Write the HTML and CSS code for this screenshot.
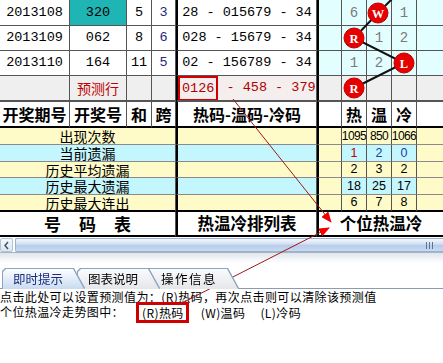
FILE: index.html
```html
<!DOCTYPE html>
<html lang="zh-CN">
<head>
    <meta charset="UTF-8">
    <title>个位热温冷走势图</title>
    <link rel="stylesheet" href="styles.css">
</head>
<body>
    <!-- 走势表 -->
    <div class="sheet">
        <!-- 第 1 行 -->
        <div class="c num">2013108</div>
        <div class="c num teal">320</div>
        <div class="c num">5</div>
        <div class="c num navy">3</div>
        <div class="c num mid">28 - 015679 - 34</div>
        <div class="c tr sep"></div>
        <div class="c tr dig">6</div>
        <div class="c tr"></div>
        <div class="c tr dig">1</div>
        <div class="c tr last"></div>

        <!-- 第 2 行 -->
        <div class="c num">2013109</div>
        <div class="c num">062</div>
        <div class="c num">8</div>
        <div class="c num navy">6</div>
        <div class="c num mid">028 - 15679 - 34</div>
        <div class="c tr sep"></div>
        <div class="c tr"></div>
        <div class="c tr dig">1</div>
        <div class="c tr dig">2</div>
        <div class="c tr last"></div>

        <!-- 第 3 行 -->
        <div class="c num">2013110</div>
        <div class="c num">164</div>
        <div class="c num">11</div>
        <div class="c num navy">5</div>
        <div class="c num mid">02 - 156789 - 34</div>
        <div class="c tr sep"></div>
        <div class="c tr dig">1</div>
        <div class="c tr dig">2</div>
        <div class="c tr"></div>
        <div class="c tr last"></div>

        <!-- 预测行 -->
        <div class="c pr"></div>
        <div class="c pr red-label">预测行</div>
        <div class="c pr"></div>
        <div class="c pr"></div>
        <div class="c num mid pr pred"><span class="hit">0126</span><span class="rest"> - 458 - 379</span></div>
        <div class="c pr sep"></div>
        <div class="c pr"></div>
        <div class="c pr"></div>
        <div class="c pr"></div>
        <div class="c pr last"></div>

        <!-- 表头 -->
        <div class="c hd">开奖期号</div>
        <div class="c hd">开奖号</div>
        <div class="c hd">和</div>
        <div class="c hd">跨</div>
        <div class="c hd mid">热码-温码-冷码</div>
        <div class="c hd sep"></div>
        <div class="c hd">热</div>
        <div class="c hd">温</div>
        <div class="c hd">冷</div>
        <div class="c hd last"></div>

        <!-- 统计行 -->
        <div class="c st yl label">出现次数</div>
        <div class="c st yl mid"></div>
        <div class="c st yl sep"></div>
        <div class="c st yl val tight">1095</div>
        <div class="c st yl val tight">850</div>
        <div class="c st yl val tight">1066</div>
        <div class="c st yl last"></div>

        <div class="c st cy label">当前遗漏</div>
        <div class="c st cy mid"></div>
        <div class="c st yl sep"></div>
        <div class="c st cy val red">1</div>
        <div class="c st cy val blue">2</div>
        <div class="c st cy val blue">0</div>
        <div class="c st yl last"></div>

        <div class="c st yl label">历史平均遗漏</div>
        <div class="c st yl mid"></div>
        <div class="c st yl sep"></div>
        <div class="c st yl val">2</div>
        <div class="c st yl val">3</div>
        <div class="c st yl val">2</div>
        <div class="c st yl last"></div>

        <div class="c st cy label">历史最大遗漏</div>
        <div class="c st cy mid"></div>
        <div class="c st yl sep"></div>
        <div class="c st cy val">18</div>
        <div class="c st cy val">25</div>
        <div class="c st cy val">17</div>
        <div class="c st yl last"></div>

        <div class="c st yl label end">历史最大连出</div>
        <div class="c st yl mid end"></div>
        <div class="c st yl sep end"></div>
        <div class="c st yl val end">6</div>
        <div class="c st yl val end">7</div>
        <div class="c st yl val end">8</div>
        <div class="c st yl last end"></div>

        <!-- 底部标题 -->
        <div class="c ft label spaced">号码表</div>
        <div class="c ft mid">热温冷排列表</div>
        <div class="c ft sep wide">个位热温冷</div>
    </div>

    <!-- 横向滚动条 -->
    <div class="hscroll">
        <div class="hs-btn">
            <svg width="7" height="9" viewBox="0 0 7 9"><path d="M5 1 L2 4.5 L5 8" fill="none" stroke="#3d4f6e" stroke-width="1.4"/></svg>
        </div>
        <div class="hs-thumb">
            <svg class="grip" width="8" height="7" viewBox="0 0 8 7">
                <rect x="0" y="0" width="1" height="7" fill="#5d7393"/>
                <rect x="3" y="0" width="1" height="7" fill="#5d7393"/>
                <rect x="6" y="0" width="1" height="7" fill="#5d7393"/>
            </svg>
        </div>
    </div>
    <div class="hs-shade"></div>

    <!-- 提示面板 -->
    <div class="panel">
        <div class="tabs">
            <div class="tab active"><span>即时提示</span></div>
            <div class="tab second"><span>图表说明</span></div>
            <div class="tab third"><span>操作信息</span></div>
        </div>
        <div class="tip">
            <p class="line">点击此处可以设置预测值为：(R)热码，再次点击则可以清除该预测值</p>
            <p class="line two">个位热温冷走势图中：<span class="boxed">(R)热码</span><span class="opt">(W)温码</span><span class="opt l">(L)冷码</span></p>
        </div>
    </div>

    <!-- 走势连线与标注箭头 -->
    <svg class="overlay" width="443" height="363" viewBox="0 0 443 363">
        <defs>
            <marker id="ah" markerWidth="11" markerHeight="9" refX="10" refY="4.5" orient="auto" markerUnits="userSpaceOnUse">
                <path d="M0,0 L11,4.5 L0,9 z" fill="#f00000"/>
            </marker>
        </defs>
        <polyline points="404,-13 378,13 354,38 404,63 354,88" fill="none" stroke="#111" stroke-width="2"/>
        <g class="ball">
            <circle cx="378" cy="13" r="10"/>
            <text x="378" y="17.5">W</text>
            <circle cx="354" cy="38" r="10"/>
            <text x="354" y="42.5">R</text>
            <circle cx="404" cy="63" r="10"/>
            <text x="404" y="67.5">L</text>
            <circle cx="354" cy="88" r="10"/>
            <text x="354" y="92.5">R</text>
        </g>
        <line x1="233" y1="99" x2="331" y2="222" stroke="#9c1a1a" stroke-width="1" marker-end="url(#ah)"/>
        <line x1="178" y1="305" x2="329" y2="228" stroke="#9c1a1a" stroke-width="1" marker-end="url(#ah)"/>
    </svg>
</body>
</html>
```

FILE: styles.css
```css
* {
    margin: 0;
    padding: 0;
    box-sizing: border-box;
}

body {
    width: 443px;
    height: 363px;
    overflow: hidden;
    position: relative;
    background: #fff;
    color: #000;
    font-family: "Noto Sans CJK SC", sans-serif;
}

/* 走势表 */
.sheet {
    display: grid;
    grid-template-columns: 70px 57px 25px 24px 141px 25px 25px 25px 25px 26px;
    grid-template-rows: 26px 25px 25px 25px 27px 17px 17px 16px 17px 17px 25px;
}

.c {
    display: flex;
    align-items: center;
    justify-content: center;
    border-right: 1px solid #555;
    border-bottom: 1px solid #555;
    white-space: nowrap;
    overflow: hidden;
    line-height: 1;
}

.c.last {
    border-right: none;
}

.num {
    font-family: "Liberation Mono", monospace;
    font-size: 13.5px;
}

.teal {
    background: #1fb5b5;
}

.navy {
    color: #1c2a80;
}

.mid {
    border-left: 2px solid #000;
}

.sep {
    border-left: 2px solid #000;
}

/* 右侧走势区 */
.tr {
    background: #e2feff;
}

.dig {
    font-family: "Liberation Mono", monospace;
    font-size: 14px;
    color: #7a7a7a;
}

/* 预测行 */
.pr {
    background: #efefef;
}

.red-label {
    color: #c00000;
    font-size: 14px;
}

.pred {
    background: #f4eeee;
    color: #b00000;
    justify-content: flex-start;
    align-items: stretch;
}

.pred .hit {
    display: flex;
    align-items: center;
    border: 2px solid #d40000;
    padding: 0 2px;
    margin-bottom: -1px;
}

.pred .rest {
    display: flex;
    align-items: center;
    white-space: pre;
}

/* 表头 */
.hd {
    font-size: 16px;
    font-weight: 700;
    border-top: 1px solid #555;
    border-bottom: 2px solid #000;
    background: #fff;
}

/* 统计行 */
.st {
    font-size: 14px;
    overflow: visible;
    border-bottom-color: #8a8a8a;
}

.label {
    grid-column: 1 / 5;
}

.yl {
    background: #fffbc8;
}

.cy {
    background: #c4f6fd;
}

.val {
    font-family: "Liberation Sans", sans-serif;
    font-size: 12.5px;
}

.val.tight {
    font-size: 12px;
    letter-spacing: -0.6px;
}

.red {
    color: #c00000;
}

.blue {
    color: #2040a0;
}

.st.end {
    border-bottom: 2px solid #000;
}

/* 底部标题 */
.ft {
    font-size: 16.5px;
    font-weight: 700;
    border-bottom: 2px solid #000;
    background: #fff;
}

.spaced {
    font-size: 17px;
    letter-spacing: 18px;
    padding-left: 18px;
}

.wide {
    grid-column: 6 / 11;
    border-right: none;
}

/* 横向滚动条 */
.hscroll {
    display: flex;
    height: 16px;
    padding-top: 1px;
    border-bottom: 1px solid #a9b4c0;
}

.hs-btn {
    width: 13px;
    display: flex;
    align-items: center;
    justify-content: center;
    background: linear-gradient(#f6f9fc, #dce5ef);
    border: 1px solid #b4c3d4;
    border-radius: 2px;
}

.hs-thumb {
    flex: 1;
    margin-left: 2px;
    display: flex;
    align-items: center;
    justify-content: flex-end;
    padding-right: 9px;
    border: 1px solid #9ab1d1;
    border-right: none;
    border-radius: 2px 0 0 2px;
    background: linear-gradient(#f4f8fd 0%, #d3e1f3 40%, #b8cdea 55%, #c9daf0 100%);
}

.hs-shade {
    height: 10px;
    background: linear-gradient(#dfe6ee, #ffffff);
}

/* 提示面板 */
.panel {
    padding-top: 5px;
}

.tabs {
    display: flex;
    height: 21px;
    padding-left: 3px;
    border-bottom: 1px solid #8c9cb0;
}

.tab {
    position: relative;
    filter: drop-shadow(1px 0 0 #8ea3bd) drop-shadow(-1px 0 0 #8ea3bd) drop-shadow(0 -1px 0 #8ea3bd);
}

.tab span {
    display: block;
    height: 20px;
    margin-top: 1px;
    padding: 0 21px 0 10px;
    font-size: 12.5px;
    line-height: 20px;
    clip-path: polygon(0 3px, 3px 0, calc(100% - 11px) 0, 100% 100%, 0 100%);
    background: linear-gradient(#fafbfc, #e4e6ea);
}

.tab.active {
    z-index: 3;
}

.tab.active span {
    color: #1a2d7c;
    background: linear-gradient(#fdfeff, #c9dbf1);
}

.tab.second {
    z-index: 2;
    margin-left: -6px;
}

.tab.third {
    z-index: 1;
    margin-left: -13px;
}

.tab.third span {
    padding-left: 15px;
    letter-spacing: 1.5px;
}

.tip {
    font-size: 12px;
    letter-spacing: 0.4px;
}

.line {
    height: 16px;
    line-height: 16px;
    white-space: nowrap;
}

.line.two {
    display: flex;
    align-items: center;
    height: 22px;
    margin-top: -4px;
}

.boxed {
    display: inline-flex;
    align-items: center;
    height: 21px;
    margin-left: 12px;
    padding: 2px 2px 0 3px;
    border: 3px solid #d00000;
}

.opt {
    margin-left: 12px;
    padding-top: 2px;
}

.opt.l {
    margin-left: 15px;
}

/* 连线层 */
.overlay {
    position: absolute;
    top: 0;
    left: 0;
    pointer-events: none;
}

.ball circle {
    fill: #e60000;
    stroke: #c20000;
    stroke-width: 1;
}

.ball text {
    fill: #fff;
    font-family: "Liberation Serif", serif;
    font-weight: 700;
    font-size: 12.5px;
    text-anchor: middle;
}
```
